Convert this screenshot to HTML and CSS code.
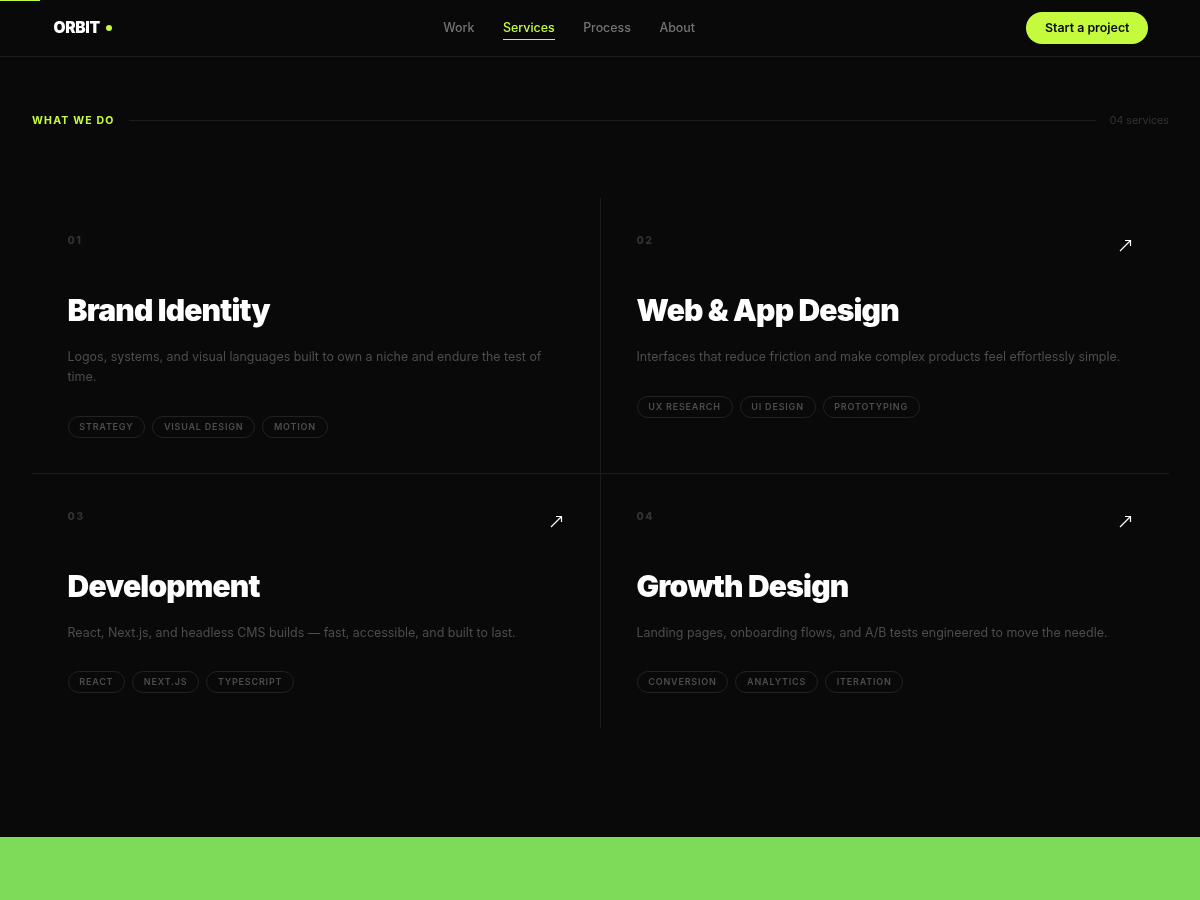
FILE: index.html
```html
<!DOCTYPE html>
<html lang="en">
<head>
  <meta charset="UTF-8">
  <meta name="viewport" content="width=device-width, initial-scale=1.0">
  <title>Orbit Services</title>
  <link rel="stylesheet" href="styles.css">
</head>
<body>
  <div class="progress"></div>
  <nav class="nav">
    <a class="logo" href="#">ORBIT<span class="logo-dot"></span></a>
    <div class="nav-links">
      <a href="#">Work</a>
      <a class="active" href="#">Services</a>
      <a href="#">Process</a>
      <a href="#">About</a>
    </div>
    <a class="cta" href="#">Start a project</a>
  </nav>

  <main class="services">
    <div class="section-head">
      <span class="eyebrow">WHAT WE DO</span>
      <span class="head-line"></span>
      <span class="count">04 services</span>
    </div>

    <div class="grid">
      <article class="card">
        <div class="card-top"><span class="num">01</span></div>
        <h2>Brand Identity</h2>
        <p class="desc">Logos, systems, and visual languages built to own a niche and endure the test of time.</p>
        <div class="tags">
          <span class="tag">STRATEGY</span>
          <span class="tag">VISUAL DESIGN</span>
          <span class="tag">MOTION</span>
        </div>
      </article>
      <article class="card">
        <div class="card-top">
          <span class="num">02</span>
          <svg class="arrow" viewBox="0 0 14 14"><path d="M1 12 11.5 1.5M6 1.5h5.5V7"/></svg>
        </div>
        <h2>Web &amp; App Design</h2>
        <p class="desc">Interfaces that reduce friction and make complex products feel effortlessly simple.</p>
        <div class="tags">
          <span class="tag">UX RESEARCH</span>
          <span class="tag">UI DESIGN</span>
          <span class="tag">PROTOTYPING</span>
        </div>
      </article>
      <article class="card">
        <div class="card-top">
          <span class="num">03</span>
          <svg class="arrow" viewBox="0 0 14 14"><path d="M1 12 11.5 1.5M6 1.5h5.5V7"/></svg>
        </div>
        <h2>Development</h2>
        <p class="desc">React, Next.js, and headless CMS builds — fast, accessible, and built to last.</p>
        <div class="tags">
          <span class="tag">REACT</span>
          <span class="tag">NEXT.JS</span>
          <span class="tag">TYPESCRIPT</span>
        </div>
      </article>
      <article class="card">
        <div class="card-top">
          <span class="num">04</span>
          <svg class="arrow" viewBox="0 0 14 14"><path d="M1 12 11.5 1.5M6 1.5h5.5V7"/></svg>
        </div>
        <h2>Growth Design</h2>
        <p class="desc">Landing pages, onboarding flows, and A/B tests engineered to move the needle.</p>
        <div class="tags">
          <span class="tag">CONVERSION</span>
          <span class="tag">ANALYTICS</span>
          <span class="tag">ITERATION</span>
        </div>
      </article>
    </div>
  </main>

  <div class="band"></div>
</body>
</html>
```

FILE: styles.css
```css
* {
  box-sizing: border-box;
}
html, body {
  height: 900px;
  overflow: hidden;
}
body {
  margin: 0;
  background: #090909;
  color: #fff;
  font-family: Inter, sans-serif;
  display: flex;
  flex-direction: column;
}
a {
  text-decoration: none;
  color: inherit;
}
.progress {
  position: absolute;
  top: 0;
  left: 0;
  width: 40px;
  height: 1px;
  background: #c4fc3d;
}
.nav {
  height: 57px;
  flex: none;
  padding: 0 52px 1px 53.5px;
  border-bottom: 1px solid #1c1c1c;
  display: flex;
  align-items: center;
  justify-content: space-between;
  will-change: transform;
}
.logo {
  font-size: 15.5px;
  font-weight: 900;
  letter-spacing: -0.3px;
  display: flex;
  align-items: center;
  gap: 6px;
}
.logo-dot {
  width: 6px;
  height: 6px;
  border-radius: 50%;
  background: #c4fc3d;
}
.nav-links {
  display: flex;
  gap: 28.5px;
  font-size: 12.4px;
  font-weight: 500;
  color: #737373;
}
.nav-links a {
  padding: 4px 0;
  border-bottom: 1px solid transparent;
}
.nav-links .active {
  color: #c4fc3d;
  border-bottom-color: #c4fc3d;
}
.cta {
  background: #c4fc3d;
  color: #0a0a0a;
  font-size: 12.4px;
  font-weight: 600;
  height: 32px;
  padding: 0 18.5px;
  border-radius: 16px;
  display: flex;
  align-items: center;
}
.services {
  flex: 1;
  padding: 55px 31px 0 32px;
  will-change: transform;
}
.section-head {
  display: flex;
  align-items: center;
  gap: 14px;
  height: 16px;
  margin-bottom: 70px;
}
.eyebrow {
  font-size: 10.5px;
  font-weight: 700;
  letter-spacing: 1.2px;
  color: #c4fc3d;
}
.head-line {
  flex: 1;
  height: 1px;
  background: #1c1c1c;
}
.count {
  font-size: 10.7px;
  color: #333;
}
.grid {
  display: grid;
  grid-template-columns: 569px 568px;
  grid-template-rows: 276px 254px;
}
.card {
  padding: 36px 36px 35px 35.5px;
}
.card:nth-child(odd) {
  border-right: 1px solid #1c1c1c;
}
.card:nth-child(-n+2) {
  border-bottom: 1px solid #1c1c1c;
}
.card:nth-child(-n+2) .tags {
  margin-top: 28.5px;
}
.card-top {
  height: 14px;
  display: flex;
  justify-content: space-between;
  align-items: flex-start;
}
.num {
  font-size: 10.5px;
  font-weight: 800;
  letter-spacing: 1.5px;
  color: #333;
}
.arrow {
  width: 14px;
  height: 14px;
  margin: 5px 0 0 0;
  fill: none;
  stroke: #fff;
  stroke-width: 1.2;
}
h2 {
  margin: 42px 0 0;
  font-size: 30px;
  line-height: 40px;
  font-weight: 900;
  letter-spacing: -0.8px;
}
.desc {
  margin: 17px 0 0;
  font-size: 12.44px;
  line-height: 20px;
  color: #4d4d4d;
}
.tags {
  margin-top: 27.5px;
  display: flex;
  gap: 7px;
}
.tag {
  height: 22px;
  padding: 0 10.75px;
  border: 1px solid #222;
  border-radius: 11px;
  font-size: 9px;
  font-weight: 600;
  letter-spacing: 0.8px;
  color: #4d4d4d;
  display: flex;
  align-items: center;
}
.band {
  flex: none;
  height: 63px;
  background: #7edb5a;
}
```
